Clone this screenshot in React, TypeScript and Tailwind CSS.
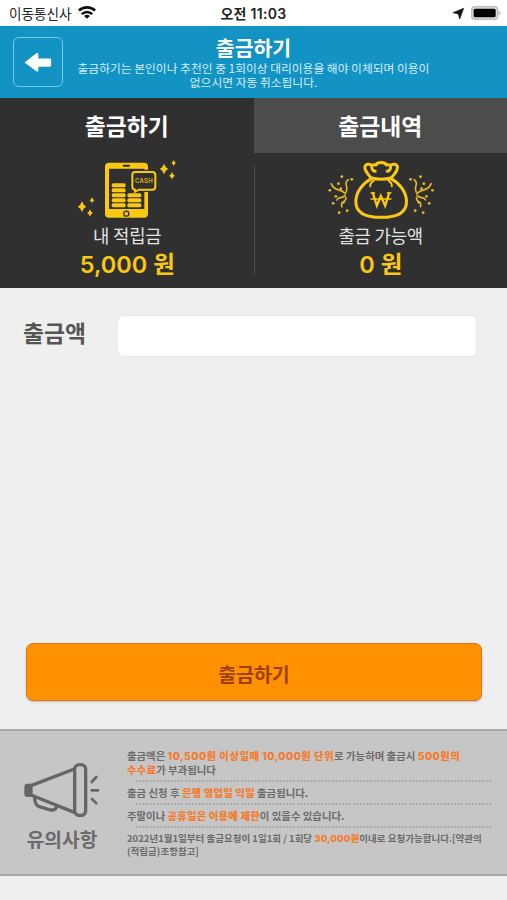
import type { ReactNode } from "react";
import clsx from "clsx";

function WifiIcon() {
  return (
    <svg viewBox="0 0 54 40" className="h-[13px] w-[18px]" fill="none" stroke="#111" strokeWidth="8">
      <path d="M2 14C16 1 38 1 52 14" />
      <path d="M11 25C20 16 34 16 43 25" />
      <path d="M27 39L18 31C23 26 31 26 36 31Z" fill="#111" stroke="none" />
    </svg>
  );
}

function Sparkle({ x, y, r }: { x: number; y: number; r: number }) {
  const s = r * 0.34;
  return (
    <path
      d={`M${x} ${y - r}L${x + s} ${y - s}L${x + r * 0.8} ${y}L${x + s} ${y + s}L${x} ${y + r}L${x - s} ${y + s}L${x - r * 0.8} ${y}L${x - s} ${y - s}Z`}
      fill="#fac813"
    />
  );
}

function PhoneIcon() {
  return (
    <svg viewBox="225 192 312 186" className="h-[62px] w-[104px]">
      <rect x="315" y="203" width="129" height="165" rx="12" fill="#fac813" />
      <path d="M327 221H433V342H327Z" fill="#303030" />
      <rect x="368" y="209" width="22" height="6" rx="3" fill="#303030" />
      <circle cx="379" cy="356" r="7.5" fill="none" stroke="#303030" strokeWidth="4" />
      <rect x="390" y="224" width="83" height="67" rx="10" fill="#303030" />
      <g fill="#fac813">
        {[265, 280, 295, 310, 325].map((y) => (
          <rect key={y} x="335" y={y} width="42" height="12" rx="5" />
        ))}
        {[295, 310, 325].map((y) => (
          <rect key={y} x="382" y={y} width="42" height="12" rx="5" />
        ))}
      </g>
      <path
        d="M405 231H457Q466 231 466 240V275Q466 284 457 284H417L405 290V284Q397 283 397 275V240Q397 231 405 231Z"
        fill="#303030"
        stroke="#fac813"
        strokeWidth="6"
      />
      <text x="405" y="264" textLength="53" fontSize="18" className="font-[Inter,sans-serif] font-medium" fill="#fac813">
        CASH
      </text>
      <Sparkle x={246} y={335} r={16} />
      <Sparkle x={276} y={316} r={9} />
      <Sparkle x={270} y={354} r={11} />
      <Sparkle x={492} y={222} r={16} />
      <Sparkle x={521} y={204} r={9} />
      <Sparkle x={516} y={242} r={11} />
    </svg>
  );
}

const confetti = [
  [262, 245], [292, 253], [252, 266], [226, 286], [259, 281], [244, 304],
  [236, 325], [267, 322], [278, 347], [254, 353],
];

function Confetti() {
  return (
    <g fill="none" stroke="#e5b72b" strokeWidth="5" strokeLinecap="round">
      <path d="M230 266Q236 280 250 284Q265 288 273 296" />
      <path d="M281 254Q271 263 276 273Q279 282 275 291" />
      <path d="M247 315Q251 307 259 308Q265 308 272 301" />
      <path d="M262 335Q259 324 267 320Q275 316 274 307" />
      {confetti.map(([x, y]) => (
        <circle key={`${x}-${y}`} cx={x} cy={y} r="4.2" fill="#e5b72b" stroke="none" />
      ))}
    </g>
  );
}

function BagIcon() {
  return (
    <svg viewBox="217.5 192 324 186" className="h-[62px] w-[108px]">
      <Confetti />
      <g transform="translate(760 0) scale(-1 1)">
        <Confetti />
      </g>
      <g fill="none" stroke="#fac813" strokeWidth="9" strokeLinecap="round" strokeLinejoin="round">
        <path d="M352 250C325 264 304 291 304 320C304 352 333 367 380 367C427 367 456 352 456 320C456 291 435 264 408 250" />
        <path d="M350 249C341 238 330 228 331 216C333 205 347 206 353 212M362 229C348 227 348 204 364 210C369 200 391 200 396 210C412 204 412 227 398 229M407 212C413 206 427 205 429 216C430 228 419 238 410 249" />
        <path d="M350 249Q380 256 410 249" />
        <path d="M358 257Q347 263 347 274M402 257Q412 263 412 274" strokeWidth="6" />
        <path d="M355 294L367 332L379 303L392 332L404 294" strokeWidth="7" strokeLinejoin="miter" />
        <path d="M350 312H409M350 294H360M399 294H409" strokeWidth="5" />
      </g>
    </svg>
  );
}

function MegaphoneIcon() {
  return (
    <svg viewBox="66 105 240 174" className="h-[58px] w-[80px]" fill="none" stroke="#666" strokeWidth="10" strokeLinecap="round" strokeLinejoin="round">
      <rect x="224" y="116" width="33" height="152" rx="14" />
      <path d="M223 129L93 179V207L223 259" />
      <path d="M95 173H82Q73 173 73 183V204Q73 213 82 213H95Z" fill="#666" stroke="none" />
      <path d="M104 216Q105 238 118 242L151 252Q165 254 169 244" />
      <path d="M275 168L289 153M275 193H294M276 219L289 232" strokeWidth="8" />
    </svg>
  );
}

function Point({ wide, children }: { wide?: boolean; children: ReactNode }) {
  return (
    <span
      className={clsx(
        "font-[Inter,'Noto_Sans_CJK_KR',sans-serif] font-extrabold text-[#f67a2b]",
        wide ? "tracking-[0.46px]" : "tracking-[0.15px]"
      )}
    >
      {children}
    </span>
  );
}

function Dots() {
  return (
    <svg className="ml-[9px] h-[2px] w-[355px]">
      <line x1="0" y1="1" x2="355" y2="1" stroke="#949494" strokeWidth="1.5" strokeDasharray="1.5 2" />
    </svg>
  );
}

function Summary({ icon, label, amount }: { icon: ReactNode; label: string; amount: string }) {
  return (
    <div className="flex flex-1 flex-col items-center pt-[6px] text-center">
      {icon}
      <div className="mt-[2px] h-[25px] text-[17.8px] leading-[25px] tracking-[-0.2px] text-[#e2e2e2]">{label}</div>
      <div className="mt-[1px] h-[32px] font-[Inter,'Noto_Sans_CJK_KR',sans-serif] text-[23.5px] leading-[32px] font-semibold text-[#fac813]">
        {amount}
      </div>
    </div>
  );
}

export default function App() {
  return (
    <div className="flex h-[900px] w-[507px] flex-col overflow-hidden bg-[#efefef] font-['Noto_Sans_CJK_KR',sans-serif] whitespace-nowrap">
      <div className="grid h-[26px] shrink-0 grid-cols-[1fr_auto_1fr] items-center bg-white text-[#222]">
        <div className="flex items-center gap-[6px] pl-[9px] text-[13.6px]">
          이동통신사
          <WifiIcon />
        </div>
        <div className="font-[Inter,'Noto_Sans_CJK_KR',sans-serif] text-[14px] font-semibold tracking-[0.3px]">
          오전 11:03
        </div>
        <div className="flex items-center justify-end gap-[7px] pr-[6px]">
          <svg viewBox="0 0 33 33" className="size-[11px]">
            <path d="M32 1L20 33L16 18L0 14Z" fill="#111" stroke="#111" strokeWidth="2" />
          </svg>
          <svg viewBox="0 0 90 42" className="h-[14px] w-[30px]">
            <rect x="2" y="2" width="78" height="38" rx="10" fill="#ddd" stroke="#bbb" strokeWidth="4" />
            <rect x="8" y="8" width="66" height="26" rx="5" fill="#000" />
            <path d="M83 15Q89 17 89 21Q89 25 83 28Z" fill="#bbb" />
          </svg>
        </div>
      </div>

      <header className="grid h-[72px] shrink-0 grid-cols-[62px_1fr_62px] bg-[#1392c4] text-white">
        <button className="mt-[11px] ml-[13px] flex size-[50px] items-center justify-center rounded-[6px] border border-[#79c9e8]">
          <svg viewBox="0 0 84 58" className="h-[19px] w-[28px]">
            <path d="M1 29L37 1Q43 -2 43 5V17H78Q82 17 82 21V38Q82 42 78 42H43V53Q43 60 37 56Z" fill="#fff" />
          </svg>
        </button>
        <div className="flex flex-col items-center pt-[8px]">
          <h1 className="text-[20.5px] leading-[27px] font-bold">출금하기</h1>
          <p className="text-center text-[11.75px] leading-[14px] text-[#d5eefa]">
            출금하기는 본인이나 추천인 중 1회이상 대리이용을 해야 이체되며 이용이
            <br />
            없으시면 자동 취소됩니다.
          </p>
        </div>
      </header>

      <section className="h-[190px] shrink-0 bg-[#303030]">
        <div className="grid h-[55px] grid-cols-2 text-[22.8px] leading-[55px] font-bold text-white">
          <div className="text-center">출금하기</div>
          <div className="bg-[#4c4c4c] text-center">출금내역</div>
        </div>
        <div className="flex h-[135px] pl-[1px]">
          <Summary icon={<PhoneIcon />} label="내 적립금" amount="5,000 원" />
          <div className="mt-[12px] h-[110px] w-px bg-[#4c4c4c]" />
          <Summary icon={<BagIcon />} label="출금 가능액" amount="0 원" />
        </div>
      </section>

      <main className="flex flex-1 flex-col pt-[28px]">
        <label className="flex items-start">
          <span className="w-[118px] pl-[23px] text-[22.8px] leading-[34px] font-bold text-[#555]">출금액</span>
          <input className="h-[40px] w-[358px] rounded-[5px] bg-white shadow-[0_0_1px_#ccc] outline-none" />
        </label>
        <button className="mt-[287px] ml-[26px] h-[58px] w-[456px] rounded-[7px] border border-[#d87822] bg-[#ff9100] pt-[3px] text-[19.4px] font-bold text-[#9c400d] shadow-[0_1px_2px_#bbb]">
          출금하기
        </button>
      </main>

      <footer className="mb-[24px] flex h-[147px] shrink-0 border-y-2 border-[#a8a8a8] bg-[#c6c6c6] text-[#6b6b6b]">
        <div className="flex w-[127px] flex-col items-center pt-[30px] pr-[3px]">
          <MegaphoneIcon />
          <div className="mt-[6px] text-[19.2px] leading-[28px] font-bold">유의사항</div>
        </div>
        <div className="pt-[18px] text-[10.4px] leading-[13px] font-bold">
          <p className="h-[31px]">
            출금액은 <Point wide>10,500원 이상일때 10,000원 단위</Point>로 가능하며 출금시 <Point wide>500원의</Point>
            <br />
            <Point>수수료</Point>가 부과됩니다
          </p>
          <Dots />
          <p className="h-[21px] leading-[21px]">
            출금 신청 후 <Point>은행 영업일 익일</Point> 출금됩니다.
          </p>
          <Dots />
          <p className="h-[21px] leading-[21px]">
            주말이나 <Point>공휴일은 이용에 제한</Point>이 있을수 있습니다.
          </p>
          <Dots />
          <p className="pt-[4px] text-[9.5px] leading-[12px]">
            2022년1월1일부터 출금요청이 1일1회 / 1회당 <Point>30,000원</Point>이내로 요청가능합니다.[약관의
            <br />
            (적립금)조항참고]
          </p>
        </div>
      </footer>
    </div>
  );
}
